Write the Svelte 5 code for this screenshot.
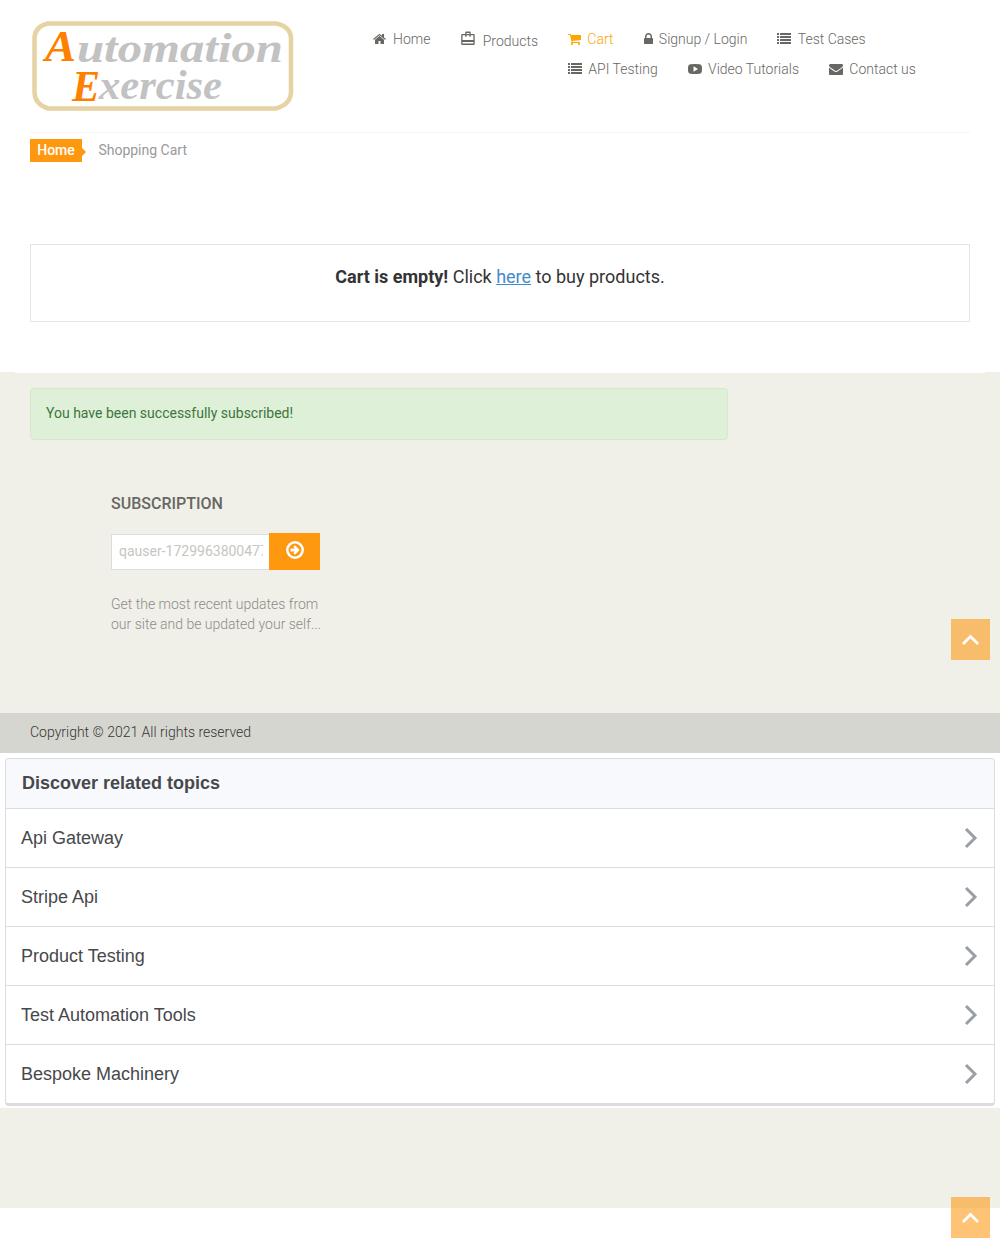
<script>
  const rows = [
    [
      { label: 'Home', icon: 'home' },
      { label: 'Products', icon: 'bag' },
      { label: 'Cart', icon: 'cart', active: true },
      { label: 'Signup / Login', icon: 'lock' },
      { label: 'Test Cases', icon: 'list' }
    ],
    [
      { label: 'API Testing', icon: 'list' },
      { label: 'Video Tutorials', icon: 'video' },
      { label: 'Contact us', icon: 'mail' }
    ]
  ];
  const topics = ['Api Gateway', 'Stripe Api', 'Product Testing', 'Test Automation Tools', 'Bespoke Machinery'];
</script>

{#snippet icon(name)}
  {#if name === 'home'}
    <svg class="icon home" viewBox="64 0 1664 1792"><path d="M1472 992v480q0 26-19 45t-45 19h-384v-384h-256v384h-384q-26 0-45-19t-19-45v-480q0-1 .5-3t.5-3l575-474 575 474q1 2 1 6zm223-69l-62 74q-8 9-21 11h-3q-13 0-21-7l-692-577-692 577q-12 8-24 7-13-2-21-11l-62-74q-8-10-7-23.5t11-21.5l719-599q32-26 76-26t76 26l244 204v-195q0-14 9-23t23-9h192q14 0 23 9t9 23v408l219 182q10 8 11 21.5t-7 23.5z" /></svg>
  {:else if name === 'bag'}
    <svg class="icon bag" viewBox="0 0 16 16"><path fill-rule="evenodd" d="M5.2 3V1.6Q5.2.6 6.2.6h3.5q1 0 1 1V3h3q1 0 1 1v9q0 1-1 1H2.2q-1 0-1-1V4q0-1 1-1zM6.5 3h2.9V1.9H6.500zM2.500 4.300v4.600h10.900V4.300h-2.700v1.500H9.400V4.300H6.500v1.500H5.200V4.300zM2.500 10.900v1.700h10.900v-1.700z" /></svg>
  {:else if name === 'cart'}
    <svg class="icon home" viewBox="64 0 1664 1792"><path d="M704 1536q0 52-38 90t-90 38-90-38-38-90 38-90 90-38 90 38 38 90zm896 0q0 52-38 90t-90 38-90-38-38-90 38-90 90-38 90 38 38 90zm128-1088v512q0 24-16.500 42.500t-40.500 21.500l-1044 122q13 60 13 70 0 16-24 64h920q26 0 45 19t19 45-19 45-45 19h-1024q-26 0-45-19t-19-45q0-11 8-31.500t16-36 21.500-40 15.500-29.500l-177-823h-204q-26 0-45-19t-19-45 19-45 45-19h256q16 0 28.500 6.500t19.500 15.500 13 24.500 8 26 5.500 29.500 4.500 26h1201q26 0 45 19t19 45z" /></svg>
  {:else if name === 'lock'}
    <svg class="icon lock" viewBox="320 0 1152 1792"><path d="M640 768h512v-192q0-106-75-181t-181-75-181 75-75 181v192zm832 96v576q0 40-28 68t-68 28h-960q-40 0-68-28t-28-68v-576q0-40 28-68t68-28h32v-192q0-184 132-316t316-132 316 132 132 316v192h32q40 0 68 28t28 68z" /></svg>
  {:else if name === 'list'}
    <svg class="icon" viewBox="0 0 14 14">
      {#each [1, 4, 7, 10] as y}
        <rect x="0" {y} width="2" height="2" rx=".3" /><rect x="3" {y} width="11" height="2" rx=".3" />
      {/each}
    </svg>
  {:else if name === 'video'}
    <svg class="icon" viewBox="0 0 14 14"><path fill-rule="evenodd" d="M2.500 2.200Q7 1.800 11.500 2.200 13.500 2.300 13.800 4.200 14.200 7 13.800 9.800 13.500 11.600 11.500 11.800 7 12.200 2.500 11.800.500 11.600.200 9.800-.200 7 .200 4.200.500 2.300 2.500 2.200zM5.500 4.200v5.600L10 7z" /></svg>
  {:else}
    <svg class="icon" viewBox="0 0 1792 1792"><path d="M1792 710v794q0 66-47 113t-113 47h-1472q-66 0-113-47t-47-113v-794q44 49 101 87 362 246 497 345 57 42 92.500 65.500t94.500 48 110 24.500h2q51 0 110-24.500t94.500-48 92.500-65.500q170-123 498-345 57-39 100-87zm0-294q0 79-49 151t-122 123q-376 261-468 325-10 7-42.500 31t-54 38.500-52 32.500-57.500 27-50 9h-2q-23 0-50-9t-57.500-27-52-32.500-54-38.500-42.500-31q-91-64-262-182.500t-205-142.500q-62-42-117-115.500t-55-136.500q0-78 41.500-130t118.500-52h1472q65 0 112.500 47t47.500 113z" /></svg>
  {/if}
{/snippet}

{#snippet chevronUp()}
  <svg width="18" height="12" viewBox="0 0 18 12"><path d="M1 10 8.500 2.500 16 10" fill="none" stroke="#fff" stroke-width="2.700" /></svg>
{/snippet}

<header>
  <svg class="logo" width="264" height="92" viewBox="0 0 264 92" role="img" aria-label="Automation Exercise">
    <path class="frame" d="M18 3.500H246Q261 6.500 261 19V72Q261 84 246 88.500H18Q4.500 84 4.500 72V19Q4.500 6.500 18 3.500Z" />
    <text class="cap" x="15" y="41" font-size="45" textLength="31" lengthAdjust="spacingAndGlyphs">A</text>
    <text class="rest" x="47" y="42" font-size="43" textLength="206" lengthAdjust="spacingAndGlyphs">utomation</text>
    <text class="cap" x="42" y="81" font-size="45" textLength="28" lengthAdjust="spacingAndGlyphs">E</text>
    <text class="rest" x="69" y="79" font-size="42" textLength="123" lengthAdjust="spacingAndGlyphs">xercise</text>
  </svg>
  <nav>
    {#each rows as row, i}
      <ul class:second={i === 1}>
        {#each row as item}
          <li class={item.icon} class:active={item.active}>{@render icon(item.icon)}<span>{item.label}</span></li>
        {/each}
      </ul>
    {/each}
  </nav>
</header>

<main>
  <div class="crumbs"><span class="crumb">Home</span><span>Shopping Cart</span></div>
  <p class="empty"><b>Cart is empty!</b> Click <u>here</u> to buy products.</p>
</main>

<footer>
  <div class="alert">You have been successfully subscribed!</div>
  <section class="subscribe">
    <h2>Subscription</h2>
    <div class="form">
      <div class="field"><span>qauser-1729963800477</span></div>
      <div class="send">
        <svg width="18" height="18" viewBox="0 0 18 18"><circle cx="9" cy="9" r="7.700" fill="none" stroke="#fff" stroke-width="2.500" /><path d="M4.500 7.600H9L7.300 5.900 9 4.300 13.700 9 9 13.700 7.300 12.100 9 10.400H4.500z" fill="#fff" /></svg>
      </div>
    </div>
    <p>Get the most recent updates from<br />our site and be updated your self...</p>
  </section>
  <div class="copyright">Copyright © 2021 All rights reserved</div>
</footer>

<section class="related">
  <h3>Discover related topics</h3>
  {#each topics as topic}
    <div class="topic">
      <span>{topic}</span>
      <svg width="14" height="22" viewBox="0 0 14 22"><path d="M2 2 11 11 2 20" fill="none" stroke="#9a9fa6" stroke-width="3" /></svg>
    </div>
  {/each}
</section>
<div class="band"></div>
<div class="up first">{@render chevronUp()}</div>
<div class="up last">{@render chevronUp()}</div>

<style>
  :global(body) { background: #fff; font: 14px/20px Roboto, sans-serif; color: #696763; }
  :global(#app) { position: relative; height: 1238px; overflow: hidden; }
  header { display: flex; height: 133px; margin: 0 30px; border-bottom: 1px solid #f5f5f5; box-sizing: border-box; }
  .logo { margin-top: 20px; flex: none; }
  .frame { fill: none; stroke: #e6d2a3; stroke-width: 4.500; }
  .cap, .rest { font-family: "Liberation Serif", serif; font-style: italic; font-weight: 700; font-variant-ligatures: none; }
  .cap { fill: #ff8000; }
  .rest { fill: #c2c2c2; }
  nav { margin: 29px 0 0 79px; font-weight: 300; }
  ul { display: flex; gap: 30px; margin: 0 0 10px; padding: 0; list-style: none; }
  .second { margin-left: 195px; }
  li { display: flex; align-items: center; white-space: nowrap; height: 20px; }
  .icon { width: 14px; height: 14px; fill: currentColor; margin-right: 6.300px; flex: none; }
  .home .icon, .cart .icon { width: 13px; }
  .home .icon { margin-right: 7px; }
  .lock .icon { width: 9px; }
  .bag .icon { width: 16px; height: 16px; }
  .bag span { position: relative; top: 2px; }
  .active { color: #fea500; }
  main { box-sizing: border-box; padding: 6px 30px 0; height: 239px; }
  .crumbs { display: flex; gap: 16.400px; line-height: 23px; color: #999; }
  .crumb { position: relative; width: 52px; text-align: center; background: #fe980f; color: #fff; font-weight: 500; }
  .crumb::after { content: ''; position: absolute; left: 52px; top: 9px; border: 4px solid transparent; border-left-color: #fe980f; border-right: 0; }
  .empty { box-sizing: border-box; height: 78px; margin: 82px 0 0; padding-top: 22px; border: 1px solid #e6e4df; text-align: center; font-size: 18px; color: #333; }
  .empty b { font-weight: 700; }
  .empty u { color: #428bca; }
  footer { background: linear-gradient(#fff, #fff) 15px 0 / 970px 1px no-repeat #f0f0e9; height: 381px; box-sizing: border-box; padding-top: 16px; }
  .alert { box-sizing: border-box; width: 698px; height: 52px; margin-left: 30px; padding: 14px 15px; border: 1px solid #d6e9c6; border-radius: 4px; background: #dff0d8; color: #3c763d; }
  .subscribe { margin-left: 111px; height: 273px; }
  h2 { margin: 0; padding-top: 54px; font-size: 16px; line-height: 20px; font-weight: 500; text-transform: uppercase; }
  .form { display: flex; align-items: center; margin-top: 19px; height: 37px; width: 209px; }
  .field { box-sizing: border-box; width: 158px; height: 36px; margin-top: 1px; padding: 6px 6px 0 7px; border: 1px solid #ddd; border-right: 0; background: #fff; color: #c6c6c0; }
  .field span { display: block; overflow: hidden; white-space: nowrap; }
  .send { display: flex; align-items: flex-start; justify-content: center; box-sizing: border-box; width: 51px; height: 37px; padding-top: 8px; background: #fe980f; }
  .subscribe p { margin: 24px 0 0; font-weight: 300; color: #8c8c88; }
  .copyright { height: 40px; padding-left: 30px; line-height: 39px; background: #d6d6d0; color: #363432; font-weight: 300; }
  .related { margin: 5px 5px 2px; height: 348px; box-sizing: border-box; border: 1px solid #dadce0; border-bottom-width: 3px; border-radius: 4px; font-family: "Liberation Sans", Arial, sans-serif; font-size: 18px; color: #47484b; }
  h3 { margin: 0; padding-left: 16px; height: 49px; font-size: 18px; line-height: 48px; background: #f8f9fc; border-radius: 3px 3px 0 0; }
  .topic { display: flex; align-items: center; justify-content: space-between; box-sizing: border-box; height: 59px; border-top: 1px solid #dadce0; padding: 0 16px 0 15px; }
  .band { height: 100px; background: #f0f0e9; }
  .up { position: absolute; right: 10px; width: 39px; height: 41px; display: flex; align-items: center; justify-content: center; background: rgba(254, 152, 15, .58); }
  .first { top: 619px; }
  .last { top: 1197px; }
</style>
